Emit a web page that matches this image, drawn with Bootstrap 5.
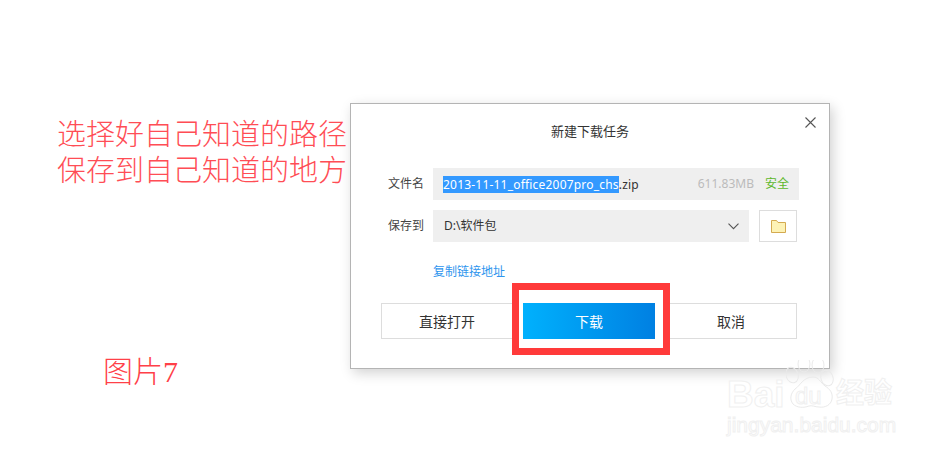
<!DOCTYPE html>
<html>
<head>
  <title>新建下载任务</title>
  <link rel="stylesheet" href="https://cdn.jsdelivr.net/npm/bootstrap@5.3.0/dist/css/bootstrap.min.css">
  <style>
    html, body { width: 949px; height: 456px; overflow: hidden; background: #fff; }
    body { font-family: "Noto Sans", "Noto Sans CJK SC", sans-serif; font-size: 12px; color: #333; }
    .shot { position: relative; width: 949px; height: 456px; padding-top: 103px; }

    .side-col { width: 350px; height: 265px; }
    .note-text { margin: 14px 0 0 57px; font-family: "Liberation Serif", "Noto Sans CJK SC", serif; font-weight: 300; font-size: 29px; line-height: 36px; color: #ff4d55; white-space: nowrap; }
    .pic-label { margin: 0 0 -22px 103px; font-family: "Liberation Serif", "Noto Sans CJK SC", serif; font-weight: 300; font-size: 30px; line-height: 36px; color: #ff4048; }

    .dlg { position: relative; width: 480px; height: 266px; background: #fff; border: 1px solid #b4b4b4; box-shadow: 3px 4px 12px rgba(0,0,0,.18); padding: 0 32px 0 30px; }
    .dlg-title { height: 64px; padding-top: 18px; font-size: 13px; line-height: 18px; text-align: center; color: #333; margin-left: -30px; margin-right: -32px; }
    .dlg-close { position: absolute; top: 13px; right: 13px; width: 11px; height: 11px; padding: 0; border: 0; background: none; display: block; }
    .form-line { height: 32px; margin-bottom: 10px; margin-left: 7px; }
    .form-name { width: 45px; flex: none; line-height: 32px; color: #444; }
    .file-box { width: 366px; height: 32px; background: #efefef; padding: 0 10px; color: #333; line-height: 32px; white-space: nowrap; margin-right: -1px; flex: none; }
    .file-sel { background: #3399ff; color: #fff; display: inline-block; height: 17px; line-height: 17px; letter-spacing: .2px; }
    .file-ext { line-height: 17px; letter-spacing: .2px; }
    .file-size { color: #bbb; margin-right: 11px; }
    .file-safe { color: #5db82c; }
    .dir-box { width: 316px; height: 32px; background: #efefef; padding: 0 10px 0 11px; line-height: 32px; flex: none; }
    .dir-btn { width: 38px; height: 32px; background: #fff; border: 1px solid #ddd; margin-left: 10px; padding: 0; flex: none; }
    .copy-link { display: block; margin: 21px 0 0 52px; height: 18px; line-height: 18px; color: #2e95ee; text-decoration: none; }
    .act-row { margin-top: 22px; }
    .act-btn { width: 132px; height: 36px; border: 1px solid #ddd; background: #fff; border-radius: 0; padding: 0; font-size: 14px; color: #333; }
    .act-main { border: 0; background: linear-gradient(90deg, #00b1fd, #0080e2); color: #fff; }

    .red-box { position: absolute; left: 512px; top: 283px; width: 158px; height: 72px; border: 7px solid #ff3a3a; pointer-events: none; }

    .wm { position: absolute; left: 727px; top: 360px; width: 172px; height: 80px; color: #fff; -webkit-text-stroke: 1px #f0f0f0; font-family: "Liberation Sans", "Noto Sans CJK SC", sans-serif; white-space: nowrap; }
    .wm-bai { position: absolute; left: 0; top: 14px; font-size: 37px; line-height: 42px; font-weight: 700; }
    .wm-cn { position: absolute; left: 109px; top: 18px; font-size: 28px; line-height: 32px; font-weight: 700; }
    .wm-url { position: absolute; left: 0; top: 52px; font-size: 21px; line-height: 26px; }
    .wm-paw { position: absolute; left: 59px; top: 0; }
    .wm-du { position: absolute; left: 68px; top: 23px; font-size: 24px; line-height: 26px; }
  </style>
</head>
<body>
  <div class="shot d-flex">
    <div class="side-col d-flex flex-column justify-content-between">
      <div class="note-text">选择好自己知道的路径<br>保存到自己知道的地方</div>
      <div class="pic-label">图片7</div>
    </div>

    <div class="dlg">
      <div class="dlg-title">新建下载任务</div>
      <button class="dlg-close" type="button" aria-label="关闭">
        <svg width="11" height="11" viewBox="0 0 11 11" class="d-block"><path d="M.5.5l10 10M10.500.5l-10 10" stroke="#555" stroke-width="1.1" fill="none"/></svg>
      </button>

      <div class="form-line d-flex">
        <div class="form-name">文件名</div>
        <div class="file-box d-flex align-items-center">
          <span class="file-sel">2013-11-11_office2007pro_chs</span><span class="file-ext">.zip</span>
          <span class="file-size ms-auto">611.83MB</span>
          <span class="file-safe">安全</span>
        </div>
      </div>

      <div class="form-line d-flex">
        <div class="form-name">保存到</div>
        <div class="dir-box d-flex align-items-center justify-content-between">
          <span>D:\软件包</span>
          <svg width="11" height="7" viewBox="0 0 11 7"><path d="M.5.7l5 5 5-5" stroke="#555" stroke-width="1.1" fill="none"/></svg>
        </div>
        <button class="dir-btn d-flex align-items-center justify-content-center" type="button" aria-label="选择文件夹">
          <svg width="15" height="13" viewBox="0 0 15 13"><path d="M.5 12.500V.5h5l1.500 2h7.500v10z" fill="#fdf2b5" stroke="#d4aa50"/></svg>
        </button>
      </div>

      <a class="copy-link" href="#">复制链接地址</a>

      <div class="act-row d-flex gap-2 justify-content-between">
        <button class="btn act-btn" type="button">直接打开</button>
        <button class="btn act-btn act-main" type="button">下载</button>
        <button class="btn act-btn" type="button">取消</button>
      </div>
    </div>

    <div class="red-box"></div>

    <div class="wm">
      <span class="wm-bai">Bai</span>
      <svg class="wm-paw" width="56" height="60" viewBox="0 0 56 60">
        <g fill="none" stroke="#eaeaea" stroke-width="1">
          <ellipse cx="18" cy="4" rx="6" ry="8"/>
          <ellipse cx="32" cy="5" rx="6" ry="8"/>
          <ellipse cx="6" cy="15" rx="6" ry="8" transform="rotate(-20 6 15)"/>
          <ellipse cx="41" cy="18" rx="6" ry="8" transform="rotate(-20 41 18)"/>
          <path d="M27 17c6 0 7 5 12 9 5 3 8 7 7 13-1 6-7 9-13 8-4 0-7-2-10-1-5 2-12 2-16-2-4-5-2-11 2-15 5-3 8-12 18-12z"/>
        </g>
      </svg>
      <span class="wm-du">du</span>
      <span class="wm-cn">经验</span>
      <span class="wm-url">jingyan.baidu.com</span>
    </div>
  </div>
</body>
</html>
